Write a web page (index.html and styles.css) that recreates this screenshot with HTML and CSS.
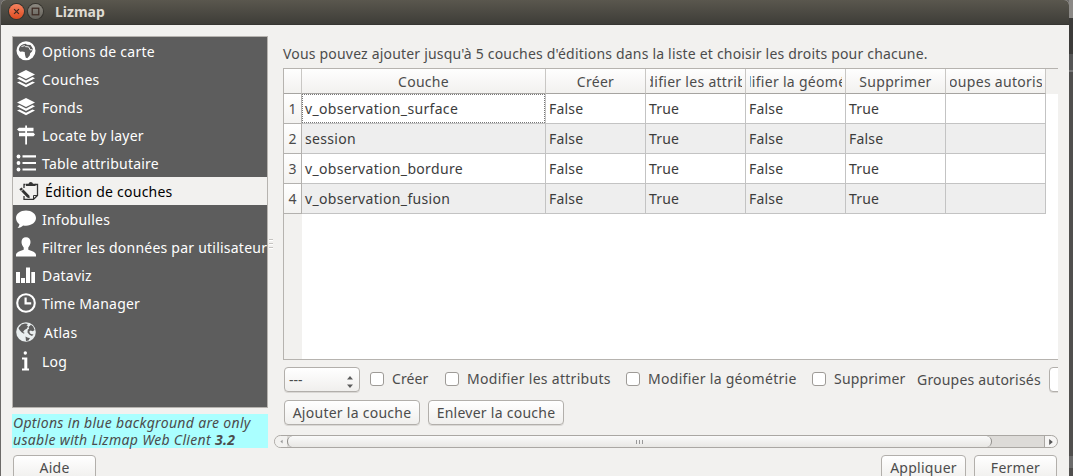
FILE: index.html
```html
<!DOCTYPE html>
<html lang="fr">
<head>
<meta charset="utf-8">
<title>Lizmap</title>
<link rel="stylesheet" href="styles.css">
</head>
<body>
<svg class="defs" width="0" height="0" aria-hidden="true">
  <symbol id="layers" viewBox="0 0 20 20"><path d="M10 1l9 4.600-9 4.500-9-4.500z"/><path d="M1 9.300l2.500-1.200 6.500 3.300 6.500-3.300L19 9.300l-9 4.600z"/><path d="M1 13.600l2.500-1.200 6.500 3.300 6.500-3.300 2.500 1.200-9 4.600z"/></symbol>
</svg>
<div class="desktop">
  <div class="window">
    <header class="titlebar">
      <span class="wbtn close"><svg viewBox="0 0 16 16"><path d="M5.400 5.400l5.200 5.200M10.600 5.400l-5.200 5.200"/></svg></span>
      <span class="wbtn max"><svg viewBox="0 0 16 16"><rect x="4.500" y="4.500" width="7" height="7"/></svg></span>
      <span class="title">Lizmap</span>
    </header>
    <div class="main">
      <aside class="side">
        <ul class="menu">
          <li><svg class="ico" viewBox="0 0 20 20"><circle cx="10" cy="9.700" r="9.500"/><path fill="#5d5d5d" d="M3 7.500C4 4.500 6 3 9.500 2.700l1.500 1 3.500.3 2.300 3.500-.8 3-1.800 1.700-.5 2.300-2.400 2.800-1.500-.6-.8-3-.3-2.700-2.500-.5-2 .3L2.800 9z"/><path stroke="#fff" stroke-width=".9" fill="none" d="M5.500 5.500l3-.8 1 .9 3.200.3 1.500 3 1.800-.2"/></svg><span>Options de carte</span></li>
          <li><svg class="ico"><use href="#layers"/></svg><span>Couches</span></li>
          <li><svg class="ico"><use href="#layers"/></svg><span>Fonds</span></li>
          <li><svg class="ico" viewBox="0 0 20 20"><path d="M9.200 .5h1.800v2.300h6.500v3.400H11v1.600h6.500L19 9.500l-1.500 1.800H11v8.200H9.200v-8.200H3V7.800h6.200V6.200H3L1 4.500l2-1.700h6.200z"/></svg><span>Locate by layer</span></li>
          <li><svg class="ico" viewBox="0 0 20 20"><circle cx="2.500" cy="3.500" r="1.900"/><circle cx="2.500" cy="10" r="1.900"/><circle cx="2.500" cy="16.500" r="1.900"/><path d="M6.500 2.300H20v2.200H6.500zM6.500 8.900H20v2.200H6.500zM6.500 15.400H20v2.200H6.500z"/></svg><span>Table attributaire</span></li>
          <li class="current"><svg class="ico" viewBox="0 0 20 20"><path d="M6.500 3.500H5V7M5 15v3.300h9.500l4-3.800v-11H16" fill="none" stroke="#333" stroke-width="1.300"/><path fill="#333" d="M7 5V2.800h2.500a2.300 2.300 0 0 1 4.500 0h2.500V5zM.3 8.200L2.500 6.500l8 8.300.2 2.500-2.500-.7z"/><path stroke="#f2f1ef" stroke-width=".8" d="M2 10.200l2.300-1.900"/><path fill="none" stroke="#333" d="M14.500 18v-3.500h4"/></svg><span>Édition de couches</span></li>
          <li><svg class="ico" viewBox="0 0 20 20"><path d="M10 1.500c5.600 0 10 3.200 10 7.600s-4.400 7.600-10 7.600c-1 0-2-.1-2.900-.3C5.600 17.900 3.900 18.900 1.500 19c1.100-1 1.800-2.300 1.900-3.800C1.300 13.800 0 11.600 0 9.100 0 4.700 4.400 1.500 10 1.500z"/></svg><span>Infobulles</span></li>
          <li><svg class="ico" viewBox="0 0 20 20"><path d="M10 .3c2.800 0 4.500 2 4.500 4.800 0 2.200-1 4.200-2.200 5.300v2.300c3.700 1.100 7.700 2.600 7.700 5.300v1.500H0V18c0-2.700 4-4.200 7.700-5.300v-2.300C6.500 9.300 5.500 7.300 5.500 5.100 5.500 2.300 7.200.3 10 .3z"/></svg><span>Filtrer les données par utilisateur</span></li>
          <li><svg class="ico" viewBox="0 0 20 20"><path d="M0 7h4v11H0zM5 13h4v5H5zM10 2.500h4V18h-4zM15.300 7H19v11h-3.700z"/></svg><span>Dataviz</span></li>
          <li><svg class="ico" viewBox="0 0 20 20"><circle cx="10" cy="10" r="8.800" fill="none" stroke="#fff" stroke-width="2.100"/><path d="M8.500 4.500h2.200v4.800h4.500v2.200H8.500z"/></svg><span>Time Manager</span></li>
          <li class="atlas"><svg class="ico" viewBox="0 0 20 20"><circle cx="10" cy="10" r="9.800" fill="#e9eeef"/><path fill="#5d5d5d" d="M5.500 2.500l3.500-1 3 .5-1.500 1.200 1.500 1-1 2.300-2.500 1.500-1.500 2 1.500.8-.5 1-2.500-1.500L3.500 8 2.500 6zM12.500 5l2.500-2.200 2.200 1.800L18.600 8l-1.800 1.200-2.300-.8-1.300 1.300 1.500 2.400 2.800.4-1.500 1.500-2.500-1.300-2-2.200.2-2.800 1.500-1.200zM9.500 14.500l2.500 1.200 2 .3-1.500 2.500-2.500.5z"/></svg><span>Atlas</span></li>
          <li><svg class="ico" viewBox="0 0 20 20"><circle cx="9.300" cy="2" r="1.700"/><path d="M6 6.500h5.300v11h1.700V19.500H6v-2h2.300V8.500H6z"/></svg><span>Log</span></li>
        </ul>
        <p class="hint">Options in blue background are only<br>usable with Lizmap Web Client <b>3.2</b></p>
      </aside>
      <div class="splitter"><i></i><i></i><i></i></div>
      <section class="panel">
        <div class="content">
          <p class="intro">Vous pouvez ajouter jusqu'à 5 couches d'éditions dans la liste et choisir les droits pour chacune.</p>
          <div class="table">
            <div class="row head"><span class="num"></span><span><em>Couche</em></span><span><em>Créer</em></span><span><em>Modifier les attributs</em></span><span><em>Modifier la géométrie</em></span><span><em>Supprimer</em></span><span><em>Groupes autorisés</em></span></div>
            <div class="row"><span class="num">1</span><span class="name focus">v_observation_surface</span><span>False</span><span>True</span><span>False</span><span>True</span><span></span></div>
            <div class="row alt"><span class="num">2</span><span class="name">session</span><span>False</span><span>True</span><span>False</span><span>False</span><span></span></div>
            <div class="row"><span class="num">3</span><span class="name">v_observation_bordure</span><span>False</span><span>True</span><span>False</span><span>True</span><span></span></div>
            <div class="row alt"><span class="num">4</span><span class="name">v_observation_fusion</span><span>False</span><span>True</span><span>False</span><span>True</span><span></span></div>
            <div class="gutter"></div>
          </div>
          <div class="controls">
            <span class="combo">---<svg viewBox="0 0 8 14"><path d="M1 4.500L4 1l3 3.500zM1 9.500h6L4 13z"/></svg></span>
            <label class="c1"><i></i>Créer</label>
            <label class="c2"><i></i>Modifier les attributs</label>
            <label class="c3"><i></i>Modifier la géométrie</label>
            <label class="c4"><i></i>Supprimer</label>
            <span class="grp">Groupes autorisés</span>
            <span class="field"></span>
          </div>
          <div class="actions"><button>Ajouter la couche</button><button>Enlever la couche</button></div>
        </div>
        <div class="scroll"><span class="left"><svg viewBox="0 0 4 6"><path d="M3.500 .5v5L.5 3z"/></svg></span><span class="thumb"><i></i><i></i><i></i></span><span class="right"><svg viewBox="0 0 4 6"><path d="M.2 0v6L3.800 3z"/></svg></span></div>
      </section>
    </div>
    <footer><button class="b83">Aide</button><span class="sp"></span><button class="b85">Appliquer</button><button class="b83">Fermer</button></footer>
  </div>
  <div class="behind"><i class="a"></i><i class="b"></i><i class="c"></i><i class="d"></i><i class="e"></i></div>
</div>
</body>
</html>
```
FILE: styles.css
```css
* { box-sizing: border-box; }
html, body { margin: 0; height: 476px; overflow: hidden; }
body { font: 14px/20px "Noto Sans", "Open Sans", sans-serif; letter-spacing: .19px; color: #4c4c4c; background: #6c6a68; }
p, ul { margin: 0; padding: 0; }
.defs { display: none; }
.desktop { display: flex; height: 476px; padding-left: 1px; }
.window { width: 1068px; height: 476px; overflow: hidden; background: #f2f1ef; border-radius: 5px 5px 0 0; display: flex; flex-direction: column; }
.titlebar { flex: 0 0 25px; display: flex; align-items: flex-start; padding-left: 8px; background: linear-gradient(#5a574e, #3e3d38); border-bottom: 1px solid #373632; }
.wbtn { width: 15px; height: 15px; margin: 4px 4px 0 0; border-radius: 50%; box-shadow: 0 0 0 1px #35332e; }
.wbtn svg { display: block; width: 15px; height: 15px; fill: none; stroke: #3d2a22; stroke-width: 1.3; }
.wbtn.close { background: linear-gradient(#f78360, #dc4b20); }
.wbtn.max { background: linear-gradient(#8d8a82, #64625b); }
.title { margin: 2px 0 0 8px; color: #dfdbd2; font-weight: 700; letter-spacing: 0; }
.main { flex: 0 0 423px; display: flex; padding: 11px 0 0 11px; }
.side { width: 256px; }
.menu { height: 372px; list-style: none; background: #5d5d5d; border: 1px solid #b6b3af; overflow: hidden; color: #fff; letter-spacing: .23px; }
.menu li { height: 28px; display: flex; align-items: center; gap: 6px; padding: 0 0 0 3px; white-space: nowrap; }
.menu span { padding-top: 1px; }
.ico { width: 20px; height: 20px; flex: none; fill: #fff; }
.menu .current { background: #f2f1ef; color: #000; padding-left: 6px; }
.menu .atlas { height: 30px; gap: 8px; }
.hint { margin-top: 6px; height: 34px; padding: 0 1px; background: #aaffff; font-style: italic; line-height: 17px; letter-spacing: .32px; white-space: nowrap; }
.splitter { width: 6px; padding-top: 203px; display: flex; flex-direction: column; gap: 2px; }
.splitter i { width: 4px; height: 2px; margin-left: 1px; border-top: 1px solid #c5c3c0; background: #fff; }
.panel { width: 784px; height: 412px; overflow: hidden; }
.content { height: 399px; padding: 8px 0 0 9px; }
.intro { height: 24px; white-space: nowrap; }
.table { width: 775px; height: 292px; display: flex; flex-direction: column; border: solid #b6b3af; border-width: 1px 0 1px 1px; background: #fff; }
.row { flex: none; height: 30px; display: grid; grid-template-columns: 18px 244px repeat(5, 100px); }
.row span { border: solid #c3c3c3; border-width: 0 1px 1px 0; padding: 5px 3px 0; color: #3c3c3c; white-space: nowrap; overflow: hidden; }
.row .name { letter-spacing: .33px; }
.row.alt span { background: #eeeeee; }
.row .num, .row.alt .num { background: linear-gradient(#fff, #f3f2f0); text-align: center; color: #4c4c4c; padding-left: 0; padding-right: 0; border-color: #b3b1ae; }
.row.head { height: 25px; background: #f2f1ef; letter-spacing: .29px; }
.row.head span { display: flex; justify-content: center; padding: 3px 0 0; margin: 0; color: #4c4c4c; background: linear-gradient(#fefefe, #f2f1ef); border-color: #c9c7c4; border-bottom-color: #a6a4a1; }
.row em { font-style: normal; max-width: 92px; overflow: hidden; display: flex; justify-content: center; height: 20px; }
.row .focus { position: relative; }
.row .focus::after { content: ""; position: absolute; inset: 0; border: 1px dotted #777; }
.gutter { flex: 1; width: 18px; background: #f2f1ef; }
.controls { display: flex; height: 26px; margin: 7px 0 0 1px; width: 900px; white-space: nowrap; line-height: 24px; letter-spacing: .29px; }
.combo, button, .field { border: 1px solid #b2afab; border-radius: 4px; background: linear-gradient(#fff, #f0efed); box-shadow: 0 1px 0 #dad8d5; height: 25px; }
.combo { width: 76px; padding-left: 4px; margin-right: 10px; display: flex; justify-content: space-between; letter-spacing: 0; }
.combo svg { width: 8px; height: 14px; margin: 7px 5px 0 0; fill: #5c5c5c; }
label { display: flex; }
label i { width: 14px; height: 14px; margin: 5px 8px 0 0; border: 1px solid #9e9b97; border-radius: 3px; background: #fff; }
.c1 { width: 75px; letter-spacing: .1px; }
.c2 { width: 181px; }
.c3 { width: 186px; }
.c4 { width: 105px; letter-spacing: .2px; }
.grp { width: 132px; padding-top: 1px; letter-spacing: .2px; }
.field { width: 80px; background: #fff; }
.actions { display: flex; gap: 8px; margin: 7px 0 0 1px; }
button { font: inherit; line-height: 23px; letter-spacing: .26px; color: #4c4c4c; padding: 0; width: 136px; white-space: nowrap; }
.scroll { display: flex; height: 13px; border: 1px solid #aaa7a3; border-radius: 7px; background: #dddbd8; overflow: hidden; }
.scroll span { display: flex; align-items: center; justify-content: center; background: linear-gradient(#fafafa, #e8e7e4); }
.scroll .left { width: 12px; background: #f2f1ef; }
.scroll .thumb { width: 705px; gap: 2px; border: solid #8e8c88; border-width: 0 1px; border-radius: 7px; }
.thumb i { width: 1px; height: 4px; background: #999; }
.scroll .right { width: 13px; margin-left: auto; border-left: 1px solid #aaa7a3; background: #f6f5f4; border-radius: 0 7px 7px 0; }
.scroll svg { width: 4px; height: 6px; fill: #555; }
.scroll .left svg { width: 3px; height: 5px; fill: #999; }
footer { display: flex; gap: 8px; padding: 7px 12px 0; }
footer .sp { flex: 1; }
footer .b83 { width: 83px; }
footer .b85 { width: 85px; }
.behind { width: 4px; background: #504f4e; display: flex; flex-direction: column; }
.behind i { display: block; }
.behind .a { height: 18px; background: #8b8986; }
.behind .b { height: 36px; background: #3c3b39; }
.behind .c { height: 18px; background: #555; border-bottom: 2px solid #777; }
.behind .d { height: 384px; }
.behind .e { height: 12px; background: #6b6b6b; }
```
